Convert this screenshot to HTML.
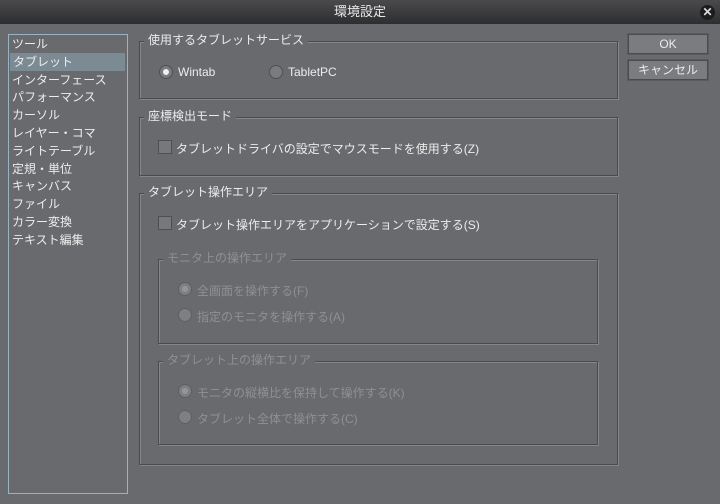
<!DOCTYPE html>
<html><head><meta charset="utf-8"><style>
*{margin:0;padding:0;box-sizing:border-box}
body{width:720px;height:504px;background:#696a6e;font-family:"Liberation Sans","Noto Sans CJK JP",sans-serif;font-size:12px;color:#ececec;position:relative;overflow:hidden}
.a{position:absolute;white-space:nowrap}
.title{left:0;top:0;width:720px;height:24px;background:linear-gradient(#4a4a4c,#2e2e30);color:#e8e8e8;text-align:center;line-height:24px;font-size:13px}
.close{left:700px;top:5px;width:15px;height:15px;border-radius:50%;background:#1c1c1c;color:#ddd;font-size:12px;line-height:15px;text-align:center;font-weight:bold}
.list{left:8px;top:34px;width:120px;height:460px;border:1px solid #98b4c4;background:#696a6e}
.list div{height:17.8px;line-height:18px;padding-left:3px}
.sel{background:#7c8a94;margin:0 2px 0 1px}
.fr{border:1px solid #4a4b4e;box-shadow:1px 1px 0 #85868a inset,1px 1px 0 #85868a}
.lb{background:#696a6e;padding:0 4px;line-height:14px}
.rad{width:14px;height:14px;border-radius:50%;background:#7a7b7e;border:1px solid #4e4f52}
.rad.on::after{content:"";position:absolute;left:3px;top:3px;width:6px;height:6px;border-radius:50%;background:#f0f0f0}
.rad.dis{background:#7e7f82;border-color:#5e5f62}
.rad.dis.on::after{background:#95969a}
.cb{width:14px;height:14px;background:#77787b;border:1px solid #4e4f52}
.dt{color:#8f9094}
.btn{left:628px;width:80px;height:20px;border:1px solid #4a4b4e;background:#7b7c80;box-shadow:0 0 0 1px #5a5b5e;text-align:center;line-height:18px}
</style></head><body>
<div class="a title">環境設定</div>
<div class="a close">✕</div>
<div class="a list">
<div>ツール</div><div class="sel">タブレット</div><div>インターフェース</div><div>パフォーマンス</div><div>カーソル</div><div>レイヤー・コマ</div><div>ライトテーブル</div><div>定規・単位</div><div>キャンバス</div><div>ファイル</div><div>カラー変換</div><div>テキスト編集</div>
</div>
<div class="a btn" style="top:34px">OK</div>
<div class="a btn" style="top:60px">キャンセル</div>

<div class="a fr" style="left:139px;top:41px;width:479px;height:58px"></div>
<div class="a lb" style="left:144px;top:33px">使用するタブレットサービス</div>
<div class="a rad on" style="left:159px;top:65px"></div>
<div class="a" style="left:178px;top:65px">Wintab</div>
<div class="a rad" style="left:269px;top:65px"></div>
<div class="a" style="left:288px;top:65px">TabletPC</div>

<div class="a fr" style="left:139px;top:117px;width:479px;height:59px"></div>
<div class="a lb" style="left:144px;top:109px">座標検出モード</div>
<div class="a cb" style="left:158px;top:140px"></div>
<div class="a" style="left:176px;top:140px">タブレットドライバの設定でマウスモードを使用する(Z)</div>

<div class="a fr" style="left:139px;top:193px;width:479px;height:272px"></div>
<div class="a lb" style="left:144px;top:185px">タブレット操作エリア</div>
<div class="a cb" style="left:158px;top:216px"></div>
<div class="a" style="left:176px;top:216px">タブレット操作エリアをアプリケーションで設定する(S)</div>

<div class="a fr" style="left:158px;top:259px;width:440px;height:85px"></div>
<div class="a lb dt" style="left:163px;top:251px">モニタ上の操作エリア</div>
<div class="a rad dis on" style="left:178px;top:282px"></div>
<div class="a dt" style="left:197px;top:282px">全画面を操作する(F)</div>
<div class="a rad dis" style="left:178px;top:308px"></div>
<div class="a dt" style="left:197px;top:308px">指定のモニタを操作する(A)</div>

<div class="a fr" style="left:158px;top:361px;width:440px;height:84px"></div>
<div class="a lb dt" style="left:163px;top:353px">タブレット上の操作エリア</div>
<div class="a rad dis on" style="left:178px;top:384px"></div>
<div class="a dt" style="left:197px;top:384px">モニタの縦横比を保持して操作する(K)</div>
<div class="a rad dis" style="left:178px;top:410px"></div>
<div class="a dt" style="left:197px;top:410px">タブレット全体で操作する(C)</div>
</body></html>
